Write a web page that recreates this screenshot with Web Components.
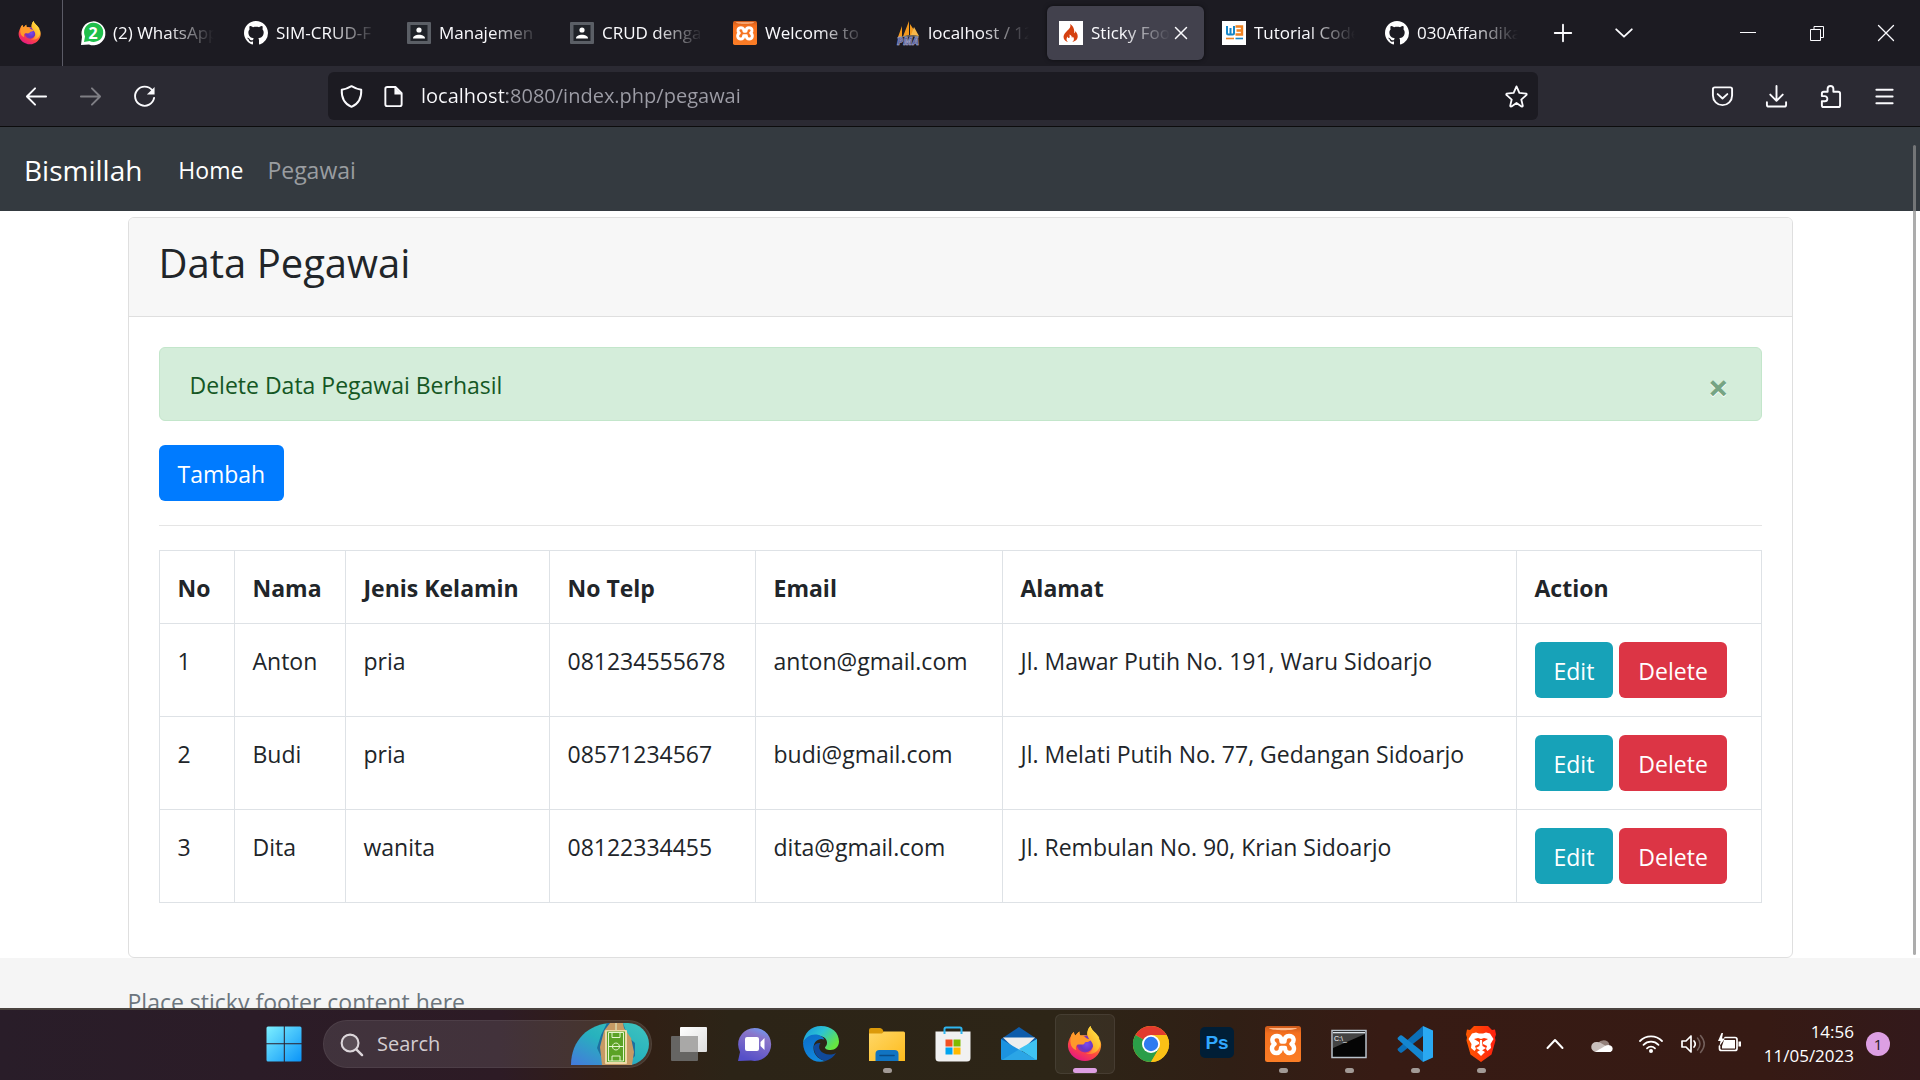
<!DOCTYPE html>
<html lang="id">
<head>
<meta charset="utf-8">
<title>Sticky Footer Navbar</title>
<style>
  html, body { height: 100%; margin: 0; }
  body { font-family: "Open Sans", "Noto Sans", sans-serif; overflow: hidden; }
</style>
</head>
<body>
<desktop-screen>
  <tab-strip slot="chrome"></tab-strip>
  <nav-toolbar slot="chrome"></nav-toolbar>
  <site-nav slot="page" brand="Bismillah">
    <nav-link active>Home</nav-link>
    <nav-link>Pegawai</nav-link>
  </site-nav>
  <data-card slot="page">
    <span slot="title">Data Pegawai</span>
    <alert-box>Delete Data Pegawai Berhasil</alert-box>
    <div><app-button kind="primary">Tambah</app-button></div>
    <rule-line></rule-line>
    <pegawai-table></pegawai-table>
  </data-card>
  <site-footer slot="page">Place sticky footer content here.</site-footer>
  <task-bar slot="taskbar"></task-bar>
</desktop-screen>

<script>
const define = (name, html, setup) => {
  const tpl = document.createElement('template');
  tpl.innerHTML = html;
  customElements.define(name, class extends HTMLElement {
    constructor() {
      super();
      this.attachShadow({ mode: 'open' }).append(tpl.content.cloneNode(true));
    }
    connectedCallback() {
      if (setup && !this.ready) { this.ready = true; setup(this, this.shadowRoot); }
    }
  });
};

const line = (d, w = 2, extra = '') =>
  `<path d="${d}" fill="none" stroke="currentColor" stroke-width="${w}" stroke-linecap="round" stroke-linejoin="round" ${extra}/>`;

const ICONS = {
  firefox: `<svg viewBox="0 0 36 36"><defs>
    <linearGradient id="a" x1=".8" y1="0" x2=".3" y2="1"><stop offset="0" stop-color="#fff44f"/><stop offset=".35" stop-color="#ffa52b"/><stop offset=".65" stop-color="#ff4a3d"/><stop offset="1" stop-color="#e31587"/></linearGradient>
    <linearGradient id="b" x1="1" y1="0" x2=".2" y2="1"><stop offset="0" stop-color="#fff44f"/><stop offset=".6" stop-color="#ffbd2f"/><stop offset="1" stop-color="#ff7139"/></linearGradient>
    <radialGradient id="c" cx=".6" cy=".5" r=".6"><stop offset="0" stop-color="#7a4bf0"/><stop offset=".6" stop-color="#6a35c4"/><stop offset="1" stop-color="#a3309b"/></radialGradient></defs>
    <path fill="url(#a)" d="M4 10c.5-2 1.500-3 3-4 0 1.500.4 2.500 1.400 3.400C10 8.200 11 6 12.500 5.500c-.3 1.800.2 3 1 4 3-1 6-.5 7 .5-.5-3 .5-8 3-10 .4 3 3 5 5.500 7.500C31 9.500 32.500 11 32.300 13c1.500 2 2.200 5 1.700 8-1.200 8-8 14-16 14S2 29 1 21C.5 17 2 13 4 10z"/>
    <circle cx="18" cy="18" r="8.500" fill="url(#c)"/>
    <path fill="#ff9a2b" d="M4 10c.5-2 1.500-3 3-4 0 1.500.4 2.500 1.400 3.400C10 8.200 11 6 12.500 5.500c-.3 1.800.2 3 1 4 2 0 4 .5 5 2 1 1 3 1.500 5.500 2-1 2-3 2.500-5 2.500-2 .5-1 2-3 2.500-2 .4-4.500-.5-6 .5-1.300 1-1.500 3-.6 5C5 23 2 18 4 10z"/>
    <path fill="url(#b)" d="M23.500 0c-3 3-4 7-2.500 11 1 2.500 5 5 5 9 0 4-3 7-7 7.500 6 2 12-1.500 13.800-7C34 16 31 11 29 7.500 26.500 5 24 3 23.500 0z"/></svg>`,
  whatsapp: `<svg viewBox="0 0 24 24"><path fill="#fff" d="M0 24l1-8A12 12 0 1 1 8 23.500z"/><path fill="#1fbf4b" d="M3 21l1-5.500A9.600 9.600 0 1 1 8.500 20z"/><text x="12" y="18" text-anchor="middle" font-size="16" font-weight="700" fill="#fff">2</text></svg>`,
  github: `<svg viewBox="0 0 16 16"><path fill="#fff" d="M8 0C3.580 0 0 3.580 0 8c0 3.540 2.290 6.530 5.470 7.590.4.070.55-.17.55-.38 0-.19-.01-.82-.01-1.490-2.010.37-2.530-.49-2.690-.94-.09-.23-.48-.94-.82-1.130-.28-.15-.68-.52-.01-.53.63-.01 1.080.58 1.230.82.72 1.210 1.870.87 2.330.66.07-.52.28-.87.51-1.070-1.780-.2-3.640-.89-3.640-3.950 0-.87.31-1.590.82-2.150-.08-.2-.36-1.020.08-2.120 0 0 .67-.21 2.200.82.64-.18 1.320-.27 2-.27s1.360.09 2 .27c1.530-1.040 2.200-.82 2.200-.82.44 1.100.16 1.920.08 2.120.51.56.82 1.270.82 2.150 0 3.070-1.870 3.750-3.650 3.950.29.25.54.73.54 1.480 0 1.070-.01 1.930-.01 2.200 0 .21.15.46.55.38A8.010 8.010 0 0 0 16 8c0-4.420-3.580-8-8-8z"/></svg>`,
  contact: `<svg viewBox="0 0 24 24"><rect y="1" width="24" height="22" rx="1" fill="#5b5f66"/><rect x="3.500" y="4" width="17" height="16" fill="#202329"/><circle cx="12" cy="9" r="2.600" fill="#fff"/><path d="M6 17.500c0-5 12-5 12 0z" fill="#fff"/></svg>`,
  xampp: `<svg viewBox="0 0 36 36"><defs><linearGradient id="a" x2="0" y2="1"><stop offset="0" stop-color="#c9581a"/><stop offset=".2" stop-color="#f4701f"/><stop offset="1" stop-color="#fb7d26"/></linearGradient></defs><rect width="36" height="36" rx="2.500" fill="url(#a)"/><path d="M4 2h28c-1 3-27 3-28 0z" fill="#ffb98a"/><path d="M12 10c-5 0-6 5-2.500 8-4 3-3 9 2 9 3.500 0 4.500-3 4.500-5h4c0 2 1 5 4.500 5 5 0 6-6 2-9 3.500-3 2.500-8-2.500-8-4 0-4.500 3-4.500 5.500h-3C16.500 13 16 10 12 10z" fill="none" stroke="#fff" stroke-width="4.400" stroke-linejoin="round"/></svg>`,
  pma: `<svg viewBox="0 0 24 24"><path d="M2 16L6 5v11zM7 15.500L13 0v14zM14 14.500V3l7 10.500z" fill="#f39a1e"/><path d="M15 14l3-8 5 9z" fill="#f8b84a"/><path d="M1 17c7-2 15-3 22-1" stroke="#888" fill="none"/><text x="12" y="23.500" text-anchor="middle" font-size="10" font-weight="800" font-style="italic" fill="#59609c" stroke="#c5c8e0" stroke-width=".4">PMA</text></svg>`,
  flame: `<svg viewBox="0 0 24 24"><rect width="24" height="24" fill="#fff"/><path d="M11 3c1.500 3-1 5-3.500 7.500C5 13 4 15 4.800 17.500 5.500 19.500 7 20.500 9 21c-2-1.500-2-4 0-5.500-.2 1 .2 1.600 1 1.600 1.300-.4.5-2 .5-3.500 2 .8 2.500 2.200 2.300 3.200.8-.2 1-.8.900-1.300 2 2 1.300 4.500-.5 5.500 3-.5 5.500-2.500 5.500-5.500 0-2.500-1-4-2.500-5.500.2 1.300-.2 2-.9 2.300C15.500 8.500 14.500 5 11 3z" fill="#d5400f"/></svg>`,
  w3: `<svg viewBox="0 0 24 24"><rect width="24" height="24" fill="#fff"/><path d="M5 5v7q0 1.500 1.500 1.500h4q1.500 0 1.500-1.500V5M8.500 7v6" fill="none" stroke="#1686c8" stroke-width="2"/><path d="M13.500 5.500H20v8h-6.500M14.500 9.500H20" fill="none" stroke="#f08322" stroke-width="2.400"/><path d="M4 17.500h8" stroke="#f08322" stroke-width="1.600"/><path d="M13.500 17.500H21" stroke="#1686c8" stroke-width="1.600"/></svg>`,
  close: `<svg viewBox="0 0 24 24">${line('M6 6l12 12M18 6L6 18', 1.6)}</svg>`,
  plus: `<svg viewBox="0 0 24 24">${line('M12 3v18M3 12h18')}</svg>`,
  down: `<svg viewBox="0 0 24 24">${line('M3.500 8l8.500 8 8.500-8')}</svg>`,
  min: `<svg viewBox="0 0 24 24"><path d="M4 11.500h16" stroke="currentColor"/></svg>`,
  restore: `<svg viewBox="0 0 24 24"><path d="M5.500 8.500h10v11h-10zM9 8V5.500h9.500v11H16" fill="none" stroke="currentColor"/></svg>`,
  winclose: `<svg viewBox="0 0 24 24">${line('M4.500 4.500l15 15M19.500 4.500l-15 15', 1.3)}</svg>`,
  back: `<svg viewBox="0 0 24 24">${line('M22 12H2M10.500 3.500L2 12l8.500 8.500')}</svg>`,
  forward: `<svg viewBox="0 0 24 24">${line('M2 12h20M13.500 3.500L22 12l-8.500 8.500')}</svg>`,
  reload: `<svg viewBox="0 0 24 24">${line('M20 5.500A10 10 0 1 0 22 13.500')}<path d="M22.500 2v8h-8z" fill="currentColor"/></svg>`,
  shield: `<svg viewBox="0 0 24 24">${line('M12 1.200C9 3 5.500 4.500 1.800 5 1.500 13 4 19.500 12 22.800 20 19.500 22.500 13 22.200 5 18.500 4.500 15 3 12 1.200z')}</svg>`,
  doc: `<svg viewBox="0 0 24 24">${line('M14 2H5.500Q3.500 2 3.500 4v16q0 2 2 2h13q2 0 2-2V8.500z')}<path d="M13 2l8 8h-8z" fill="currentColor"/></svg>`,
  star: `<svg viewBox="0 0 24 24">${line('M12 1.500l3 6.800 7.400.7q.5 1-.2 1.600l-5.200 4.600 1.600 6.600q-.4 1-1.400.6L12 18.800l-5.200 3.600q-1 .3-1.400-.6L7 15.200 1.800 10.600Q1 10 1.600 9L9 8.300z', 1.9)}</svg>`,
  pocket: `<svg viewBox="0 0 24 24">${line('M4 2.500h16q2 0 2 2V11a10 10 0 0 1-20 0V4.500q0-2 2-2z')}${line('M7 9.500l5 4.500 5-4.500')}</svg>`,
  download: `<svg viewBox="0 0 24 24">${line('M12 1v15M5.500 10l6.500 6.500 6.500-6.500M2 18v2.500q0 2 2 2h16q2 0 2-2V18')}</svg>`,
  puzzle: `<svg viewBox="0 0 24 24">${line('M9 7V4a3 3 0 0 1 6 0v3h5q2 0 2 2v12q0 2-2 2H5q-2 0-2-2v-4h3a2.700 2.700 0 0 0 0-5.400H3V9q0-2 2-2z')}</svg>`,
  menu: `<svg viewBox="0 0 24 24">${line('M3.500 5h17M3.500 12h17M3.500 19h17')}</svg>`,
  windows: `<svg viewBox="0 0 36 36"><defs><linearGradient id="a" x2="1" y2="1"><stop offset="0" stop-color="#7df0ff"/><stop offset="1" stop-color="#0a93f8"/></linearGradient></defs><path fill="url(#a)" d="M2 .500h15.800v16.800H.500V2Q.500.500 2 .500zM18.800.500H34q1.500 0 1.500 1.500v15.300H18.800zM.500 18.300h17.300v17.200H2Q.500 35.500.500 34zM18.800 18.300h16.700V34q0 1.500-1.500 1.500H18.800z"/></svg>`,
  search: `<svg viewBox="0 0 24 24">${line('M17 17l6 6', 2.6)}<circle cx="10.500" cy="10.500" r="8.800" fill="#fff2" stroke="currentColor" stroke-width="2.200"/></svg>`,
  banner: `<svg viewBox="0 0 78 42"><defs><linearGradient id="a" x1="1" x2="0" y1="0" y2="1"><stop offset="0" stop-color="#3fc4bf"/><stop offset=".5" stop-color="#27b2bd"/><stop offset="1" stop-color="#4479dc"/></linearGradient></defs>
    <path fill="url(#a)" d="M0 42C0 18 17 0 42 0h15a21 21 0 0 1 0 42z"/><path d="M36 0h16l5 14 7 6v13l-9 9H34l-8-17 4-13z" fill="#1d6f9f"/><path d="M39 0h13l1 5 7 10 3 14-2 13H31l-2-18 4-16z" fill="#c69a64"/><rect x="34" y="7" width="22" height="34" rx="1" fill="#ecd9a8"/><rect x="36" y="8.500" width="18" height="30.500" fill="#5ba226"/>
    <path d="M37.500 9.500h15v28.500h-15zM37.500 23.500h15M41 9.500v5h8v-5M41 38v-5h8v5M45 20a3.500 3.500 0 1 1-.1 0M45 0v7" fill="none" stroke="#e5f5cf"/></svg>`,
  taskview: `<svg viewBox="0 0 36 36"><defs><linearGradient id="a" x2="1" y2="1"><stop offset="0" stop-color="#fff"/><stop offset="1" stop-color="#dedede"/></linearGradient></defs><rect y="10" width="27" height="25" rx="1" fill="#666563"/><rect x="9" y="1" width="27" height="25" rx="1" fill="url(#a)"/><path d="M9 10h18v16H9z" fill="#a9a8a7"/></svg>`,
  chat: `<svg viewBox="0 0 36 36"><defs><linearGradient id="a" x1=".8" x2=".4" y2="1"><stop offset="0" stop-color="#6e9cf2"/><stop offset=".3" stop-color="#8a75c9"/><stop offset="1" stop-color="#554fc8"/></linearGradient></defs><path fill="url(#a)" d="M1 35l2-9A16.500 16.500 0 1 1 14 34.500z"/><rect x="8" y="11" width="14" height="14" rx="2" fill="#fff"/><path d="M23.500 16l4-4v12l-4-4z" fill="#fff"/></svg>`,
  edge: `<svg viewBox="0 0 36 36"><defs><linearGradient id="a" x2="1" y2=".6"><stop offset="0" stop-color="#1693df"/><stop offset=".5" stop-color="#2cc3d3"/><stop offset="1" stop-color="#66e640"/></linearGradient><linearGradient id="b" x2=".3" y2="1"><stop offset="0" stop-color="#0c6dc9"/><stop offset="1" stop-color="#1187dc"/></linearGradient></defs>
    <path fill="url(#a)" d="M0 17C1 7 8 0 18 0c11 0 18 7 18 15.500 0 5-4 8.500-8.500 8.500-4 0-5.500-1.500-5.500-2.500 0-.7 2-1.500 2-5 0-4-4-7-10-7C8 9.500 2 13 0 17z"/>
    <path fill="url(#b)" d="M0 17c2-5.500 7-8.500 12-8.500 4 0 8 2 9.500 5-6-2-11 2-11 8.500 0 8 7 12 12 13-12 3.500-22-5-22.500-18z"/>
    <path fill="#10499b" d="M11 20c-1 8 5 13.500 11.500 15 5-1.500 8.500-4.500 10.500-8-6 3-13 1.500-16-3-1.500-2.500-1-5 .5-7-3-.5-6 1-6.500 3z"/></svg>`,
  explorer: `<svg viewBox="0 0 36 36"><defs><linearGradient id="a" x2="1" y2="1"><stop offset="0" stop-color="#ffd767"/><stop offset="1" stop-color="#fdbb1c"/></linearGradient></defs><path d="M0 8V4q0-2 2-2h9q1.500 0 2.500 1.500L16 8z" fill="#dc9a0a"/><path d="M0 7.500h13l2-2h19.500Q36 5.500 36 7v28H0z" fill="url(#a)"/><path d="M6.500 35v-7q0-4 4-4h15q4 0 4 4v7z" fill="#1174c2"/><path d="M11 29.500h14" stroke="#0a4c87" stroke-width="1.600" stroke-linecap="round"/></svg>`,
  store: `<svg viewBox="0 0 36 36"><path d="M.500 5.500h35V32q0 3.500-3.500 3.500H4Q.500 35.500.500 32z" fill="#f1f1f1"/><path d="M9.500 8V3q0-1.500 1.500-1.500h14q1.500 0 1.500 1.500v5" fill="none" stroke="#2fb6f0" stroke-width="2"/><path d="M10.500 13.500h7v7h-7z" fill="#f25022"/><path d="M18.500 13.500h7v7h-7z" fill="#7fba00"/><path d="M10.500 21.500h7v7h-7z" fill="#00a4ef"/><path d="M18.500 21.500h7v7h-7z" fill="#ffb900"/></svg>`,
  mail: `<svg viewBox="0 0 36 36"><path d="M0 13L18 1l18 12v10H0z" fill="#0d5cab"/><path d="M2 11.500h32L18 27z" fill="#eee"/><path d="M0 13l36 21H1q-1 0-1-1z" fill="#1c93e0"/><path d="M36 13v20q0 1-1 1L18 23z" fill="#3fc3f3"/><path d="M18 23.500L35 34H1z" fill="#2ba5e6"/></svg>`,
  chrome: `<svg viewBox="0 0 36 36"><circle cx="18" cy="18" r="18" fill="#fbc116"/><path d="M18 18L2.400 9A18 18 0 0 1 33.600 9z" fill="#e33b2e"/><path d="M18 18l8 4.500L18 36A18 18 0 0 1 2.400 9z" fill="#2b9e48"/><path d="M18 9h15.600A18 18 0 0 1 18 36l8-13.500z" fill="#fbc116"/><circle cx="18" cy="18" r="9" fill="#fff"/><circle cx="18" cy="18" r="7.200" fill="#2f7bf0"/></svg>`,
  ps: `<svg viewBox="0 0 36 36"><rect x="1" y="1" width="34" height="31" rx="5" fill="#001e36"/><text x="18" y="23" text-anchor="middle" font-size="19" font-weight="600" fill="#31a8ff">Ps</text></svg>`,
  terminal: `<svg viewBox="0 0 36 36"><rect x="1" y="4.500" width="34" height="27" fill="#050505" stroke="#b9c2cb" stroke-width="1.500"/><path d="M2 7.500V6h32v1.500z" fill="#dde3e8"/><path d="M2 8h32L2 22z" fill="#444"/><text x="3" y="15" font-size="7" fill="#fff">C:\\_</text></svg>`,
  vscode: `<svg viewBox="0 0 36 36"><path d="M26 0v10L5 26.500q-1 .7-2 0l-2-2q-1-1 0-2z" fill="#0b6fb8"/><path d="M26 36V26L5 9.500q-1-.7-2 0l-2 2q-1 1 0 2z" fill="#1486d0"/><path d="M26 0l10 4.500v27L26 36z" fill="#2aa9f2"/></svg>`,
  brave: `<svg viewBox="0 0 36 36"><defs><linearGradient id="a" x2="1"><stop offset="0" stop-color="#ff5a00"/><stop offset="1" stop-color="#ff1f10"/></linearGradient></defs><path fill="url(#a)" d="M11 0h14l4 4 3-.500 1 5-1 3 .500 3-4 14L18 36 7.500 28.500l-4-14L4 11.500l-1-3 1-5 3 .500z"/><path fill="#fff" d="M9 7.500l4-1 3 1h4l3-1 4 1 3.500 5.500-3 5 .5 4-3.500 3-1.500-2 1-3-4-2v-2l5-3-4-1-3 1-3-1-4 1 5 3v2l-4 2 1 3-1.500 2-3.500-3 .5-4-3-5z"/><path d="M17 14h2l.5 6 3.500 2-5 3-5-3 3.500-2zM14 26l4-2.500 4 2.500-4 4z" fill="#fff"/></svg>`,
  up: `<svg viewBox="0 0 24 24">${line('M4.500 16l7.500-8 7.500 8')}</svg>`,
  cloud: `<svg viewBox="0 0 24 24"><path d="M6 14a6.500 6.500 0 0 1 12.500-1.500L12 17z" fill="#94817b"/><path d="M5 20a5 5 0 0 1 .500-10q3-.5 6 2l7 4-9 4z" fill="#c9bfbc"/><path d="M4 20q3-2 10-6 3-1.500 5.500-.5a3.500 3.500 0 0 1 0 6.500z" fill="#fff"/></svg>`,
  wifi: `<svg viewBox="0 0 24 24">${line('M1 9a15.500 15.500 0 0 1 22 0M4.500 12.800a10.500 10.500 0 0 1 15 0M8 16.300a5.600 5.600 0 0 1 8 0', 1.8)}<circle cx="12" cy="19" r="2" fill="currentColor"/></svg>`,
  speaker: `<svg viewBox="0 0 24 24">${line('M1 9h4l5-5v16l-5-5H1z', 1.7)}${line('M13 9q2.500 3 0 6', 1.7)}${line('M16.500 6q5 6 0 12M19.500 3.500q7.500 8.500 0 17', 1.5, 'opacity=".3"')}</svg>`,
  battery: `<svg viewBox="0 0 24 24">${line('M8 5.500h10q2 0 2 2v9q0 2-2 2H4.500q-2 0-2-2V14', 1.7)}<path d="M7 8h11v8.500H5V14zM21.500 9.500H24v5h-2.500z" fill="currentColor"/><path d="M4.500 1L1 9h2.500L2.500 14 8 6.500H5L6 1z" fill="currentColor"/></svg>`
};

define('ui-icon', `<style>
  :host { display: block; flex: none; width: var(--size, 24px); height: var(--size, 24px); }
  :host([name="banner"]) { width: 78px; height: 42px; }
  span { display: block; width: 100%; height: 100%; }
  svg { display: block; width: 100%; height: 100%; overflow: visible; }
</style><span></span>`, (el, root) => {
  root.querySelector('span').innerHTML = ICONS[el.getAttribute('name')];
});

define('icon-button', `<style>
  :host { display: block; flex: none; }
  button { display: grid; place-items: center; width: var(--w, 54px); height: var(--h, 48px);
    padding: 0; border: 0; border-radius: 6px; background: none; color: inherit; }
</style><button type="button"></button>`, (el, root) => {
  const b = root.querySelector('button');
  b.setAttribute('aria-label', el.getAttribute('label') || el.getAttribute('icon'));
  b.innerHTML = `<ui-icon name="${el.getAttribute('icon')}"></ui-icon>`;
});

define('desktop-screen', `<style>
  :host { display: flex; flex-direction: column; height: 100vh; background: #fff; }
  .page { flex: 1; min-height: 0; overflow: hidden; position: relative; }
  .thumb { position: absolute; right: 4px; top: 18px; bottom: 53px; width: 3px; border-radius: 2px; background: #8c8c8cb8; }
</style>
<slot name="chrome"></slot>
<main class="page"><slot name="page"></slot><div class="thumb"></div></main>
<slot name="taskbar"></slot>`);

define('browser-tab', `<style>
  :host { display: block; flex: 0 1 163px; min-width: 0; box-sizing: border-box; padding: 6px 3px; }
  .tab { display: flex; align-items: center; height: 54px; padding: 0 12px; border-radius: 6px; box-sizing: border-box; }
  :host([selected]) .tab { background: #42414d; box-shadow: 0 0 4px #0008; }
  .pick { display: flex; flex: 1; align-items: center; gap: 8px; min-width: 0; padding: 0; border: 0; background: none;
    color: #fbfbfe; font: 17px/24px "Open Sans", sans-serif; text-align: left; }
  .text { flex: 1; overflow: hidden; white-space: nowrap;
    -webkit-mask-image: linear-gradient(to left, transparent, #000 48px); mask-image: linear-gradient(to left, transparent, #000 48px); }
  .close { display: none; flex: none; --w: 22px; --h: 24px; --size: 22px; color: #fbfbfe; }
  :host([selected]) .close { display: block; }
</style><div class="tab"><button class="pick" type="button" role="tab"><span class="ic"></span><span class="text"><slot></slot></span></button><icon-button class="close" icon="close"></icon-button></div>`,
(el, root) => { root.querySelector('.ic').innerHTML = `<ui-icon name="${el.getAttribute('icon')}"></ui-icon>`; });

define('tab-strip', `<style>
  :host { display: flex; align-items: center; height: 66px; background: #1c1b22; color: #fbfbfe; }
  .pin { display: flex; align-items: center; justify-content: center; width: 63px; height: 66px; box-sizing: border-box;
    padding-right: 3px; border-right: 1px solid #5b5b66; flex: none; }
  .tabs { display: flex; flex: 0 1 1467px; min-width: 0; margin-left: 3px; }
  .win { display: flex; margin-left: auto; --w: 69px; --h: 66px; }
  .tools { display: flex; gap: 1px; --w: 60px; --size: 22px; }
</style>
<div class="pin"><ui-icon name="firefox"></ui-icon></div>
<div class="tabs" role="tablist">
  <browser-tab icon="whatsapp">(2) WhatsApp</browser-tab>
  <browser-tab icon="github">SIM-CRUD-F</browser-tab>
  <browser-tab icon="contact">Manajemen</browser-tab>
  <browser-tab icon="contact">CRUD denga</browser-tab>
  <browser-tab icon="xampp">Welcome to</browser-tab>
  <browser-tab icon="pma">localhost / 12</browser-tab>
  <browser-tab icon="flame" selected>Sticky Foo</browser-tab>
  <browser-tab icon="w3">Tutorial Code</browser-tab>
  <browser-tab icon="github">030Affandika</browser-tab>
</div>
<div class="tools"><icon-button icon="plus" label="New tab"></icon-button><icon-button icon="down" label="List all tabs"></icon-button></div>
<div class="win"><icon-button icon="min" label="Minimize"></icon-button><icon-button icon="restore" label="Restore"></icon-button><icon-button icon="winclose" label="Close"></icon-button></div>`);

define('nav-toolbar', `<style>
  :host { display: flex; align-items: center; height: 61px; padding: 0 9px; box-sizing: border-box;
    background: #2b2a33; border-bottom: 1px solid #0c0c0d; color: #fbfbfe; --size: 23px; }
  .side { flex: 1; display: flex; }
  .right { justify-content: flex-end; }
  .off { opacity: .4; }
  .url { display: flex; align-items: center; flex: 0 1 1210px; height: 48px; margin: 0 54px 0 0; box-sizing: border-box;
    padding: 0 1px 0 2px; border-radius: 6px; background: #1c1b22; --w: 42px; }
  input { flex: 1; min-width: 0; height: 36px; padding: 0; margin-left: 7px; border: 0; outline: 0;
    font: 20px/36px "Open Sans", sans-serif; background: linear-gradient(90deg, #fbfbfe 86px, #9d9da6 86px);
    -webkit-background-clip: text; background-clip: text; -webkit-text-fill-color: transparent; color: #9d9da6; }
</style>
<div class="side"><icon-button icon="back"></icon-button><icon-button icon="forward" class="off"></icon-button><icon-button icon="reload"></icon-button></div>
<div class="url"><icon-button icon="shield"></icon-button><icon-button icon="doc"></icon-button>
<input type="text" aria-label="Address" value="localhost:8080/index.php/pegawai"><icon-button icon="star"></icon-button></div>
<div class="side right"><icon-button icon="pocket"></icon-button><icon-button icon="download"></icon-button><icon-button icon="puzzle"></icon-button><icon-button icon="menu"></icon-button></div>`);

define('nav-link', `<style>
  :host { display: block; }
  a { display: block; padding: 12px; color: #9a9da0; font-size: 23px; line-height: 36px; text-decoration: none; }
  :host([active]) a { color: #fff; }
</style><a href="#"><slot></slot></a>`);

define('site-nav', `<style>
  :host { display: flex; align-items: center; height: 84px; box-sizing: border-box; padding: 2px 24px 0; background: #343a40; }
  .brand { margin-right: 24px; color: #fff; font-size: 28px; line-height: 44px; text-decoration: none; }
  nav { display: flex; }
</style><a class="brand" href="#"></a><nav><slot></slot></nav>`,
(el, root) => { root.querySelector('a').textContent = el.getAttribute('brand'); });

define('data-card', `<style>
  :host { display: block; margin: 6px auto 0; max-width: 1665px; width: 87%; box-sizing: border-box; border: 1px solid #dfdfdf;
    border-radius: 6px; color: #212529; background: #fff; font-size: 23px; line-height: 36px; }
  header { padding: 20px 30px 18px; background: #f7f7f7; border-bottom: 1px solid #dfdfdf; border-radius: 5px 5px 0 0; }
  h2 { margin: 0 0 10px; font-size: 40px; line-height: 50px; font-weight: 400; }
  .body { display: flex; flex-direction: column; gap: 24px; padding: 30px 30px 54px; }
</style><header><h2><slot name="title"></slot></h2></header><div class="body"><slot></slot></div>`);

define('alert-box', `<style>
  :host { display: flex; justify-content: space-between; padding: 19px 0 17px 30px; border: 1px solid #c3e6cb;
    border-radius: 6px; background: #d4edda; color: #155724; }
  button { margin: -18px 0; padding: 6px 32px 0 30px; border: 0; background: none; color: #76a483;
    font: 700 36px/36px "Open Sans", sans-serif; text-shadow: 0 1px 0 #fff; }
</style><span><slot></slot></span><button type="button" aria-label="Close">×</button>`);

define('app-button', `<style>
  :host { display: inline-block; vertical-align: top; }
  a { display: block; padding: 11px 19px 9px; border-radius: 6px; background: #007bff; color: #fff;
    font-size: 23px; line-height: 36px; text-decoration: none; }
  :host([kind="info"]) a { background: #17a2b8; }
  :host([kind="danger"]) a { background: #dc3545; }
</style><a href="#" role="button"><slot></slot></a>`);

define('rule-line', `<style>:host { display: block; } hr { margin: 0; border: 0; border-top: 1px solid #e5e5e5; }</style><hr>`);

define('pegawai-table', `<style>
  :host { display: block; }
  table { width: 100%; border-collapse: collapse; table-layout: fixed; }
  th, td { padding: 19px 18px 17px; border: 1px solid #dee2e6; text-align: left; vertical-align: top; white-space: nowrap; }
  .tools { padding: 18px; }
  th { font-weight: 700; }
  .actions { display: flex; gap: 6px; }
</style>
<table>
  <colgroup><col style="width:75px"><col style="width:111px"><col style="width:204px"><col style="width:206px"><col style="width:247px"><col><col style="width:245px"></colgroup>
  <thead><tr><th>No</th><th>Nama</th><th>Jenis Kelamin</th><th>No Telp</th><th>Email</th><th>Alamat</th><th>Action</th></tr></thead>
  <tbody></tbody>
</table>`, (el, root) => {
  const rows = [
    ['1', 'Anton', 'pria', '081234555678', 'anton@gmail.com', 'Jl. Mawar Putih No. 191, Waru Sidoarjo'],
    ['2', 'Budi', 'pria', '08571234567', 'budi@gmail.com', 'Jl. Melati Putih No. 77, Gedangan Sidoarjo'],
    ['3', 'Dita', 'wanita', '08122334455', 'dita@gmail.com', 'Jl. Rembulan No. 90, Krian Sidoarjo']
  ];
  root.querySelector('tbody').innerHTML = rows.map(r => `<tr>${r.map(c => `<td>${c}</td>`).join('')}
    <td class="tools"><div class="actions"><app-button kind="info">Edit</app-button><app-button kind="danger">Delete</app-button></div></td></tr>`).join('');
});

define('site-footer', `<style>
  :host { display: block; background: #f5f5f5; color: #6c757d; font-size: 23px; line-height: 88px; }
  div { width: 87%; max-width: 1665px; margin: 0 auto; }
</style><footer><div><slot></slot></div></footer>`);

define('task-app', `<style>
  :host { display: block; position: relative; flex: none; }
  button { display: grid; place-items: center; width: 60px; height: 60px; padding: 0; border: 1px solid transparent;
    border-radius: 6px; background: none; --size: 36px; }
  :host([current]) button { background: #ffffff0d; border-color: #ffffff12; }
  :host([open])::after { content: ""; position: absolute; left: 50%; bottom: 1px; width: 9px; height: 5px; margin-left: -4px;
    border-radius: 3px; background: #a29a96; }
  :host([current])::after { width: 24px; margin-left: -12px; background: #dd9fe3; }
</style><button type="button"></button>`, (el, root) => {
  const b = root.querySelector('button');
  b.setAttribute('aria-label', el.getAttribute('icon'));
  b.innerHTML = `<ui-icon name="${el.getAttribute('icon')}"></ui-icon>`;
});

define('task-bar', `<style>
  :host { display: flex; align-items: center; flex: none; height: 72px; box-sizing: border-box; padding: 0 12px 2px 254px;
    border-top: 2px solid #4a4340; color: #fff;
    background: linear-gradient(90deg, #291d29 0, #2d1b25 26%, #321e14 32%, #2c2417 38%, #2d2517 55%, #301f15 64%, #371b14 72%, #361a14 92%, #33191b 100%); }
  .search { display: flex; align-items: center; gap: 14px; flex: 0 1 329px; height: 48px; box-sizing: border-box; margin: 0 7px 0 9px;
    padding: 0 2px 0 16px; border: 1px solid #ffffff10; border-radius: 24px; background: #ffffff1a; overflow: hidden; --size: 23px; color: #dcd6da; }
  input { flex: 1; min-width: 0; padding: 0; border: 0; outline: 0; background: none; color: #dcd6da; font: 20px/28px "Open Sans", sans-serif; }
  input::placeholder { color: #d3ccd0; opacity: 1; }
  .apps { display: flex; gap: 6px; }
  .tray { display: flex; align-items: center; margin-left: auto; }
  .tray .a { --w: 48px; --size: 24px; }
  .tray .b { --w: 36px; --size: 24px; }
  time { display: block; margin: 0 12px 0 17px; text-align: right; font-size: 17px; line-height: 24px; }
  .badge { display: grid; place-items: center; width: 24px; height: 24px; margin-right: 18px; border-radius: 12px; background: #dd9fe3;
    color: #241a20; font-size: 15px; line-height: 24px; }
</style>
<task-app icon="windows"></task-app>
<label class="search"><ui-icon name="search"></ui-icon><input type="text" placeholder="Search" aria-label="Search"><ui-icon name="banner"></ui-icon></label>
<div class="apps">
  <task-app icon="taskview"></task-app><task-app icon="chat"></task-app><task-app icon="edge"></task-app>
  <task-app icon="explorer" open></task-app><task-app icon="store"></task-app><task-app icon="mail"></task-app>
  <task-app icon="firefox" open current></task-app><task-app icon="chrome"></task-app><task-app icon="ps"></task-app>
  <task-app icon="xampp" open></task-app><task-app icon="terminal" open></task-app><task-app icon="vscode" open></task-app>
  <task-app icon="brave" open></task-app>
</div>
<div class="tray">
  <icon-button class="a" icon="up" label="Hidden icons"></icon-button>
  <icon-button class="a" icon="cloud"></icon-button>
  <icon-button class="a" icon="wifi"></icon-button>
  <icon-button class="b" icon="speaker"></icon-button>
  <icon-button class="b" icon="battery"></icon-button>
  <time datetime="2023-05-11T14:56">14:56<br>11/05/2023</time>
  <span class="badge">1</span>
</div>`);
</script>
</body>
</html>
